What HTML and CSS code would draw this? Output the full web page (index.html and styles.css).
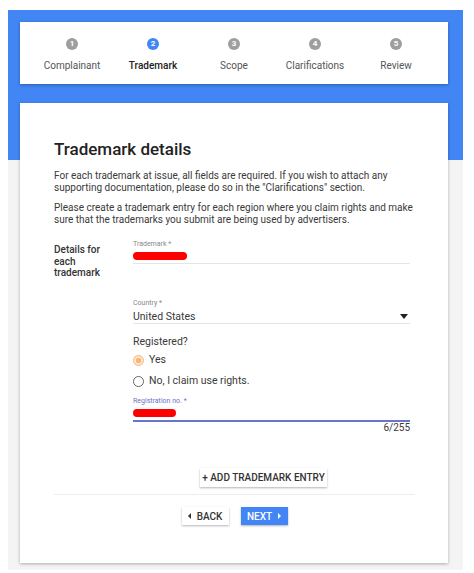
FILE: index.html
```html
<!DOCTYPE html>
<html lang="en">
<head>
    <meta charset="UTF-8">
    <meta name="viewport" content="width=device-width, initial-scale=1.0">
    <title>Trademark details</title>
    <link rel="stylesheet" href="styles.css">
</head>
<body>
    <div class="page">
        <div class="stepper">
            <div class="step"><span class="dot">1</span><span class="step-name">Complainant</span></div>
            <div class="step active"><span class="dot">2</span><span class="step-name">Trademark</span></div>
            <div class="step"><span class="dot">3</span><span class="step-name">Scope</span></div>
            <div class="step"><span class="dot">4</span><span class="step-name">Clarifications</span></div>
            <div class="step"><span class="dot">5</span><span class="step-name">Review</span></div>
        </div>

        <div class="card">
            <h1>Trademark details</h1>
            <p>For each trademark at issue, all fields are required. If you wish to attach any supporting documentation, please do so in the "Clarifications" section.</p>
            <p>Please create a trademark entry for each region where you claim rights and make sure that the trademarks you submit are being used by advertisers.</p>

            <div class="entry">
                <div class="entry-label">Details for each trademark</div>
                <div class="fields">
                    <div class="field">
                        <label>Trademark *</label>
                        <div class="value"><span class="redact"></span></div>
                    </div>
                    <div class="field country">
                        <label>Country *</label>
                        <div class="value">United States<span class="arrow"></span></div>
                    </div>
                    <div class="question">Registered?</div>
                    <div class="radio checked"><span class="ring"></span>Yes</div>
                    <div class="radio"><span class="ring"></span>No, I claim use rights.</div>
                    <div class="field focused">
                        <label>Registration no. *</label>
                        <div class="value"><span class="redact small"></span></div>
                    </div>
                    <div class="counter">6/255</div>
                    <button class="btn add">+ ADD TRADEMARK ENTRY</button>
                </div>
            </div>

            <div class="nav">
                <button class="btn"><span class="tri left"></span>BACK</button>
                <button class="btn primary">NEXT<span class="tri right"></span></button>
            </div>
        </div>
    </div>
</body>
</html>
```

FILE: styles.css
```css
body {
    margin: 0;
    background: #fff;
    font-family: Roboto, "Liberation Sans", sans-serif;
    color: #3a3a3a;
}
.page {
    width: 455px;
    margin: 10px 0 0 8px;
    padding: 12px 0 7px;
    background: linear-gradient(#4285f4 0, #4285f4 150px, #f4f4f4 150px);
}
.stepper {
    width: 428px;
    height: 62px;
    margin-left: 12px;
    box-sizing: border-box;
    padding: 16px 11.5px 0;
    background: #fff;
    box-shadow: 0 1px 3px rgba(0, 0, 0, 0.3);
    display: grid;
    grid-template-columns: repeat(5, 81px);
}
.step {
    display: flex;
    flex-direction: column;
    align-items: center;
    gap: 10px;
}
.dot {
    width: 12px;
    height: 12px;
    border-radius: 50%;
    background: #9e9e9e;
    color: #fff;
    font-size: 8px;
    font-weight: bold;
    line-height: 12px;
    text-align: center;
}
.step-name {
    font-size: 10px;
    line-height: 12px;
    color: #555;
}
.step.active .dot {
    background: #4285f4;
}
.step.active .step-name {
    color: #222;
    font-weight: 500;
}
.card {
    width: 428px;
    margin: 19px 0 0 12px;
    box-sizing: border-box;
    padding: 35px 33px 38px 34px;
    background: #fff;
    box-shadow: 0 1px 3px rgba(0, 0, 0, 0.3);
}
h1 {
    margin: 0 0 10px;
    font-size: 17px;
    font-weight: 500;
    line-height: 22px;
    color: #222;
}
p {
    margin: 0 0 9px;
    font-size: 10px;
    line-height: 11.5px;
}
.entry {
    display: grid;
    grid-template-columns: 79px 277px;
    margin-top: 15px;
}
.entry-label {
    padding-top: 4px;
    font-size: 10px;
    font-weight: 500;
    line-height: 11.5px;
    color: #333;
    width: 50px;
}
.field label {
    display: block;
    font-size: 7px;
    line-height: 9px;
    color: #888;
}
.field .value {
    height: 14px;
    display: flex;
    align-items: center;
    font-size: 10.5px;
    border-bottom: 1px solid #e4e4e4;
}
.field.country {
    margin-top: 35px;
}
.field.country .value {
    height: 15px;
    align-items: flex-end;
}
.arrow {
    margin: 0 2px 4px auto;
    border-left: 4px solid transparent;
    border-right: 4px solid transparent;
    border-top: 5px solid #222;
}
.field.focused {
    margin-top: 8px;
}
.field.focused label {
    color: #6a74c9;
}
.field.focused .value {
    border-bottom: 2px solid #6a74c9;
}
.redact {
    width: 54px;
    height: 8px;
    border-radius: 5px;
    background: #f00;
}
.redact.small {
    width: 43px;
}
.question {
    margin-top: 11px;
    font-size: 10.5px;
    line-height: 14px;
}
.radio {
    display: flex;
    align-items: center;
    gap: 5px;
    margin-top: 5px;
    font-size: 10.5px;
    line-height: 16px;
}
.radio.checked {
    margin-top: 3px;
}
.ring {
    width: 9px;
    height: 9px;
    border: 1.5px solid #666;
    border-radius: 50%;
}
.radio.checked .ring {
    border-color: #f5b676;
    background: radial-gradient(circle, #f5b676 0 2.5px, #fde6cd 3px);
}
.counter {
    text-align: right;
    font-size: 10px;
    line-height: 11px;
}
.btn {
    font-family: inherit;
    font-size: 10px;
    font-weight: 500;
    color: #333;
    background: #fff;
    border: none;
    height: 18px;
    padding: 0 6px;
    white-space: nowrap;
    box-shadow: 0 1px 2px rgba(0, 0, 0, 0.3);
    display: inline-flex;
    align-items: center;
}
.btn.add {
    height: 19px;
    margin: 35px 0 0 67px;
    width: 127px;
    padding: 0;
    justify-content: center;
}
.nav {
    margin-top: 7px;
    border-top: 1px solid #eee;
    padding-top: 12px;
    display: flex;
    justify-content: center;
    gap: 12px;
}
.nav .btn {
    width: 47px;
    justify-content: center;
}
.btn.primary {
    background: #4285f4;
    color: #fff;
}
.tri {
    border-top: 3px solid transparent;
    border-bottom: 3px solid transparent;
}
.tri.left {
    border-right: 3px solid #333;
    margin-right: 6px;
}
.tri.right {
    border-left: 3px solid #fff;
    margin-left: 6px;
}
```
